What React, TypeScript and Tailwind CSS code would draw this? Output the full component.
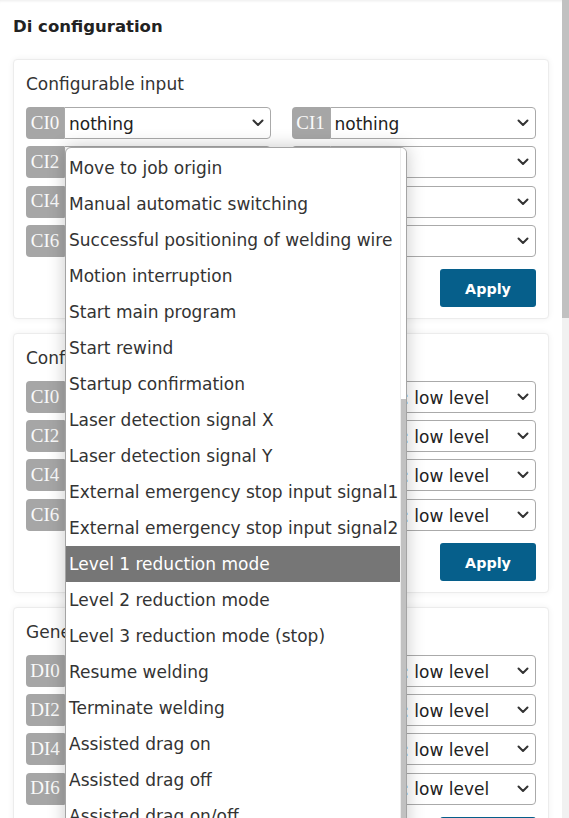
import React from "react";

const SANS = { fontFamily: '"DejaVu Sans", Verdana, sans-serif' };

function Chevron() {
  return (
    <svg width="12" height="8" viewBox="0 0 12 8" className="shrink-0">
      <polyline points="1.5,1.5 6,6 10.5,1.5" fill="none" stroke="#333" strokeWidth="2" strokeLinecap="round" strokeLinejoin="round" />
    </svg>
  );
}

function Field({ label, value }: { label: string; value: string }) {
  return (
    <div className="flex h-[32px]">
      <div className="w-[38px] shrink-0 bg-[#a6a6a6] text-[#fafafa] rounded-l-[4px] flex items-center justify-center text-[19px] font-['Liberation_Serif',serif]">
        {label}
      </div>
      <div className="flex-1 min-w-0 flex items-center border border-[#aaaaaa] rounded-r-[4px] bg-white pl-[4px] pr-[6px] text-[17px] text-[#222] whitespace-nowrap overflow-hidden">
        <span className="flex-1 pt-[3px]">{value}</span>
        <Chevron />
      </div>
    </div>
  );
}

function Card({ title, labels, value }: { title: string; labels: string[]; value: string }) {
  return (
    <div className="bg-white border border-[#ececec] rounded-[4px] shadow-[0_0_6px_rgba(0,0,0,0.06)] pt-[11px] px-[12px] pb-[11px]">
      <div className="h-[24px] leading-[24px] pt-[1px] text-[17px] text-[#333] mb-[12px]">{title}</div>
      <div className="grid grid-cols-2 gap-x-[21px] gap-y-[7.3px]">
        {labels.map((l) => (
          <Field key={l} label={l} value={value} />
        ))}
      </div>
      <div className="flex justify-end mt-[12px]">
        <button className="w-[96px] h-[38px] pt-[3px] rounded-[3px] bg-[#065f8b] text-white font-bold text-[14.3px]">Apply</button>
      </div>
    </div>
  );
}

const ITEMS = [
  "Move to job origin",
  "Manual automatic switching",
  "Successful positioning of welding wire",
  "Motion interruption",
  "Start main program",
  "Start rewind",
  "Startup confirmation",
  "Laser detection signal X",
  "Laser detection signal Y",
  "External emergency stop input signal1",
  "External emergency stop input signal2",
  "Level 1 reduction mode",
  "Level 2 reduction mode",
  "Level 3 reduction mode (stop)",
  "Resume welding",
  "Terminate welding",
  "Assisted drag on",
  "Assisted drag off",
  "Assisted drag on/off",
  "Collision detection",
];

export default function App() {
  return (
    <div className="h-[818px] w-[569px] overflow-hidden flex bg-white" style={SANS}>
      <div className="relative flex-1 min-w-0 px-[13px] pt-[14px] shadow-[inset_0_3px_3px_-2px_rgba(0,0,0,0.08)]">
        <div className="h-[24px] leading-[24px] pt-[1px] text-[16.5px] font-bold text-[#222] mb-[21px]">Di configuration</div>
        <div className="flex flex-col gap-[14px]">
          <Card title="Configurable input" labels={["CI0", "CI1", "CI2", "CI3", "CI4", "CI5", "CI6", "CI7"]} value="nothing" />
          <Card title="Configurable input level" labels={["CI0", "CI1", "CI2", "CI3", "CI4", "CI5", "CI6", "CI7"]} value="Enabled: low level" />
          <Card title="General input level" labels={["DI0", "DI1", "DI2", "DI3", "DI4", "DI5", "DI6", "DI7"]} value="Enabled: low level" />
        </div>

        {/* open select popup */}
        <div className="absolute left-[65px] top-[147px] w-[342px] h-[720px] bg-white border border-[#a4a4a4] rounded-[6px] shadow-[0_0_18px_rgba(0,0,0,0.22)] flex overflow-hidden">
          <div className="flex-1 min-w-0 pt-[2px]">
            {ITEMS.map((it) => {
              const sel = it === "Level 1 reduction mode";
              return (
                <div
                  key={it}
                  className={
                    "h-[36px] flex items-center pl-[3px] pt-[2px] text-[17px] whitespace-nowrap " +
                    (sel ? "bg-[#767676] text-white" : "text-[#333]")
                  }
                >
                  {it}
                </div>
              );
            })}
          </div>
          <div className="w-[6px] shrink-0 flex flex-col border-l border-[#ececec]">
            <div className="h-[251px] bg-white" />
            <div className="flex-1 bg-[#c1c1c1]" />
          </div>
        </div>
      </div>
      <div className="w-[7px] shrink-0 flex flex-col bg-[#f1f1f1]">
        <div className="h-[318px] bg-[#c1c1c1]" />
      </div>
    </div>
  );
}
